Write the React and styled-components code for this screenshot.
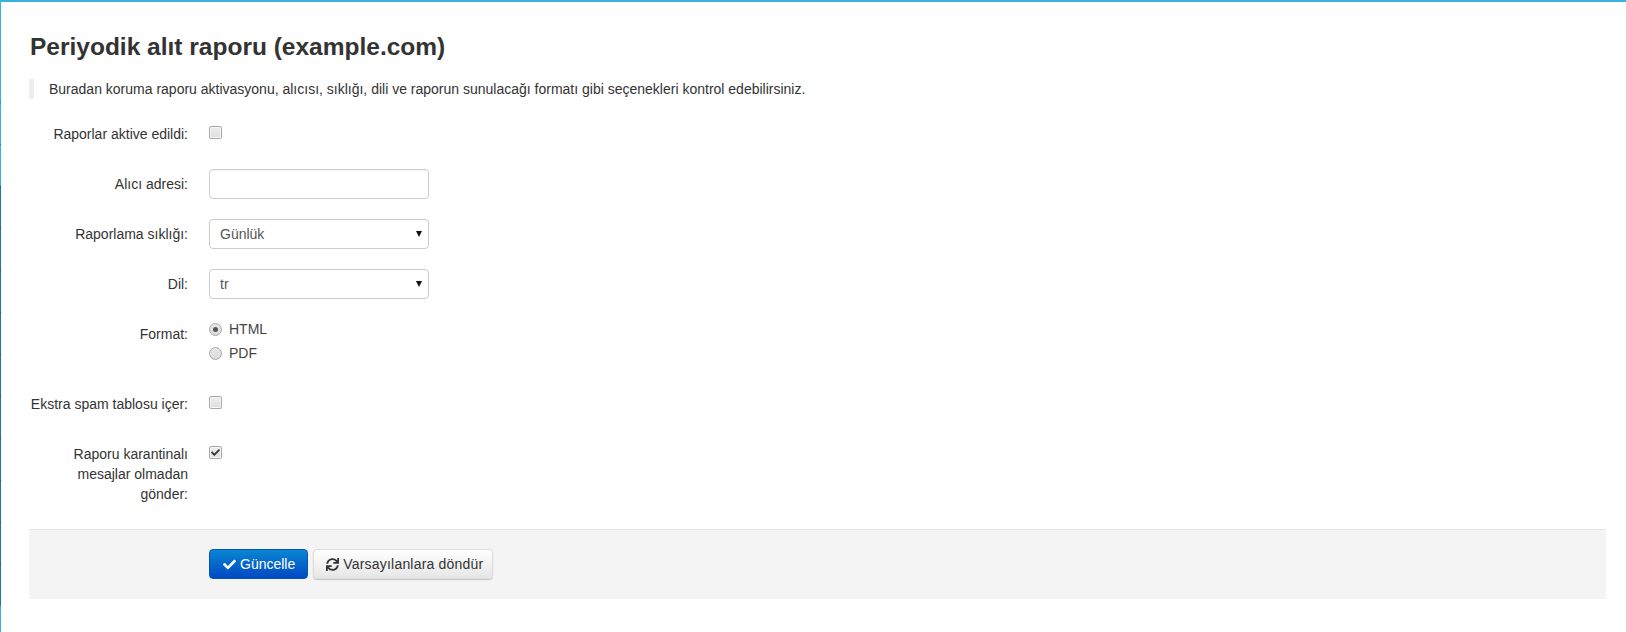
import React from 'react';
import styled, { createGlobalStyle } from 'styled-components';
import { FaCheck, FaSync } from 'react-icons/fa';

const GlobalStyle = createGlobalStyle`
  html, body {
    margin: 0;
    padding: 0;
    background: #fff;
  }
  body {
    font-family: "Liberation Sans", Arial, sans-serif;
    font-size: 14px;
    line-height: 20px;
    color: #333;
  }
`;

const Page = styled.div`
  display: flex;
  height: 632px;
  box-sizing: border-box;
  border-top: 2px solid #3ab2da;
`;

const Edge = styled.div`
  flex: 0 0 1px;
  background:
    repeating-linear-gradient(
        to bottom,
        rgba(0, 0, 0, 0.35) 0,
        rgba(0, 0, 0, 0.35) 1px,
        transparent 1px,
        transparent 42px
      )
      0 100px / 100% 504px no-repeat,
    linear-gradient(
      to bottom,
      #2bb6e6 0,
      #2bb6e6 184px,
      #1f7a96 184px,
      #1f7a96 604px,
      #2bb6e6 604px
    );
`;

const Content = styled.div`
  flex: 1;
  min-width: 0;
  padding: 0 20px 0 28px;
`;

const Title = styled.h1`
  margin: 0;
  padding: 31px 0 0 1px;
  font-size: 24.5px;
  line-height: 28px;
  font-weight: bold;
  color: #333;
`;

const Note = styled.p`
  margin: 18px 0 20px;
  padding-left: 15px;
  border-left: 5px solid #eee;
  line-height: 20px;
  font-size: 14px;
`;

const Row = styled.div`
  display: flex;
  margin-bottom: 20px;
`;

const Label = styled.label`
  flex: 0 0 159px;
  box-sizing: border-box;
  padding: 5px 0;
  text-align: right;
  margin-right: 21px;
`;

const Control = styled.div`
  flex: 1;
  min-width: 0;
`;

const Check = styled.span`
  display: flex;
  align-items: center;
  justify-content: center;
  box-sizing: border-box;
  width: 13px;
  height: 13px;
  margin-top: 7px;
  border: 1px solid #a9a9a9;
  border-radius: 2px;
  background: linear-gradient(#ededed, #dedede);
  box-shadow: inset 0 0 0 1px #f5f5f5;
  color: #333;
  font-size: 9px;
`;

const TextField = styled.input`
  display: block;
  box-sizing: border-box;
  width: 220px;
  height: 30px;
  padding: 0 10px;
  border: 1px solid #ccc;
  border-radius: 4px;
  background: #fff;
  box-shadow: inset 0 1px 1px rgba(0, 0, 0, 0.04);
  font: inherit;
  color: #555;
`;

const SelectWrap = styled.div`
  position: relative;
  width: 220px;

  &::after {
    content: '';
    position: absolute;
    top: 12px;
    right: 7px;
    border-left: 3px solid transparent;
    border-right: 3px solid transparent;
    border-top: 6px solid #111;
  }
`;

const Select = styled.select`
  display: block;
  box-sizing: border-box;
  width: 100%;
  height: 30px;
  padding: 0 10px;
  border: 1px solid #ccc;
  border-radius: 4px;
  background: #fff;
  appearance: none;
  font: inherit;
  color: #555;
`;

const RadioGroup = styled.div`
  display: flex;
  flex-direction: column;
  gap: 4px;
  padding-bottom: 6px;
`;

const RadioLine = styled.div`
  display: flex;
  align-items: center;
  gap: 7px;
  color: #444;
`;

const Radio = styled.span`
  display: flex;
  align-items: center;
  justify-content: center;
  box-sizing: border-box;
  width: 13px;
  height: 13px;
  border: 1px solid #a9a9a9;
  border-radius: 50%;
  background: linear-gradient(#e6e6e6, #dcdcdc);

  &::before {
    content: '';
    display: ${(p) => (p.$on ? 'block' : 'none')};
    width: 5px;
    height: 5px;
    border-radius: 50%;
    background: #555;
  }
`;

const Actions = styled.div`
  display: flex;
  gap: 5px;
  padding: 19px 0 20px 180px;
  border-top: 1px solid #e5e5e5;
  background: #f4f4f4;
`;

const Button = styled.button`
  display: inline-flex;
  align-items: center;
  justify-content: center;
  gap: 4px;
  box-sizing: border-box;
  height: 30px;
  padding: ${(p) => (p.$primary ? '0 12px 0 13px' : '0 9px 0 12px')};
  border: 1px solid ${(p) => (p.$primary ? '#0055b8' : '#ddd')};
  border-radius: 4px;
  background: ${(p) =>
    p.$primary
      ? 'linear-gradient(#0a86d2, #0048c4)'
      : 'linear-gradient(#fff, #e6e6e6)'};
  box-shadow: ${(p) => (p.$primary ? 'none' : '0 1px 1px rgba(0, 0, 0, 0.2)')};
  color: ${(p) => (p.$primary ? '#fff' : '#333')};
  font-family: inherit;
  font-size: 14px;
  line-height: 20px;
  letter-spacing: ${(p) => (p.$primary ? '0' : '0.2px')};

  svg {
    width: 13px;
    height: 13px;
  }
`;

const App = () => {
  return (
    <>
      <GlobalStyle />
      <Page>
        <Edge />
        <Content>
          <Title>Periyodik alıt raporu (example.com)</Title>
          <Note>
            Buradan koruma raporu aktivasyonu, alıcısı, sıklığı, dili ve raporun sunulacağı formatı gibi seçenekleri kontrol edebilirsiniz.
          </Note>
          <Row>
            <Label>Raporlar aktive edildi:</Label>
            <Control>
              <Check role="checkbox" aria-checked="false" />
            </Control>
          </Row>
          <Row>
            <Label>Alıcı adresi:</Label>
            <Control>
              <TextField type="text" />
            </Control>
          </Row>
          <Row>
            <Label>Raporlama sıklığı:</Label>
            <Control>
              <SelectWrap>
                <Select defaultValue="daily">
                  <option value="daily">Günlük</option>
                </Select>
              </SelectWrap>
            </Control>
          </Row>
          <Row>
            <Label>Dil:</Label>
            <Control>
              <SelectWrap>
                <Select defaultValue="tr">
                  <option value="tr">tr</option>
                </Select>
              </SelectWrap>
            </Control>
          </Row>
          <Row>
            <Label>Format:</Label>
            <Control>
              <RadioGroup>
                <RadioLine>
                  <Radio $on role="radio" aria-checked="true" />
                  HTML
                </RadioLine>
                <RadioLine>
                  <Radio role="radio" aria-checked="false" />
                  PDF
                </RadioLine>
              </RadioGroup>
            </Control>
          </Row>
          <Row>
            <Label>Ekstra spam tablosu içer:</Label>
            <Control>
              <Check role="checkbox" aria-checked="false" />
            </Control>
          </Row>
          <Row>
            <Label>Raporu karantinalı mesajlar olmadan gönder:</Label>
            <Control>
              <Check role="checkbox" aria-checked="true">
                <FaCheck />
              </Check>
            </Control>
          </Row>
          <Actions>
            <Button $primary>
              <FaCheck />
              Güncelle
            </Button>
            <Button>
              <FaSync />
              Varsayılanlara döndür
            </Button>
          </Actions>
        </Content>
      </Page>
    </>
  );
};

export default App;
